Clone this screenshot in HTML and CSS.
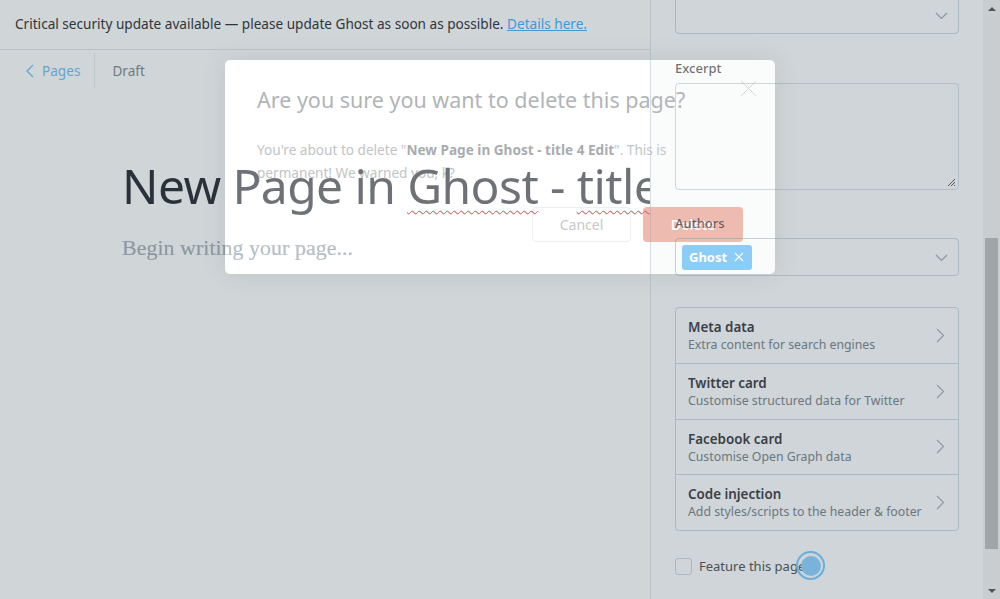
FILE: index.html
```html
<!DOCTYPE html>
<html lang="en">
<head>
<meta charset="utf-8">
<title>Ghost – Delete page</title>
<link rel="stylesheet" href="styles.css">
</head>
<body>
<div class="app">
  <main class="editor">
    <div class="banner">Critical security update available — please update Ghost as soon as possible.&nbsp;<a href="#">Details here.</a></div>
    <nav class="crumbs">
      <a class="back" href="#">
        <svg class="back-icon" width="8" height="14" viewBox="0 0 8 14"><path d="M7 1 1 7l6 6" fill="none" stroke="currentColor" stroke-width="1.2"/></svg>
        Pages
      </a>
      <span class="draft">Draft</span>
    </nav>
    <div class="editor-body">
      <h1 class="title">New Page in <span class="typo">Ghost</span> - <span class="typo">title</span> 4 Edit</h1>
      <p class="placeholder">Begin writing your page...</p>
    </div>
  </main>

  <aside class="settings">
    <div class="settings-inner">
      <div class="select select-top">
        <svg class="chev-down" width="13" height="8" viewBox="0 0 13 8"><path d="M1 1l5.5 5.5L12 1" fill="none" stroke="currentColor" stroke-width="1.2"/></svg>
      </div>

      <div class="field">
        <label class="label">Excerpt</label>
        <div class="textarea">
          <svg class="grip" width="9" height="9" viewBox="0 0 9 9"><path d="M1 8 8 1M4 8 8 4M7 8 8 7" stroke="#555" stroke-width="1"/></svg>
        </div>
      </div>

      <div class="field field-authors">
        <label class="label">Authors</label>
        <div class="select select-authors">
          <span class="chip">Ghost
            <svg width="10" height="10" viewBox="0 0 10 10"><path d="M1 1l8 8M9 1 1 9" stroke="#fff" stroke-width="1.1"/></svg>
          </span>
          <svg class="chev-down" width="13" height="8" viewBox="0 0 13 8"><path d="M1 1l5.5 5.5L12 1" fill="none" stroke="currentColor" stroke-width="1.2"/></svg>
        </div>
      </div>

      <ul class="menu">
        <li class="menu-item">
          <div><div class="menu-title">Meta data</div><div class="menu-sub">Extra content for search engines</div></div>
          <svg class="chev-right" width="9" height="15" viewBox="0 0 9 15"><path d="M1 1l6.5 6.5L1 14" fill="none" stroke="currentColor" stroke-width="1.1"/></svg>
        </li>
        <li class="menu-item">
          <div><div class="menu-title">Twitter card</div><div class="menu-sub">Customise structured data for Twitter</div></div>
          <svg class="chev-right" width="9" height="15" viewBox="0 0 9 15"><path d="M1 1l6.5 6.5L1 14" fill="none" stroke="currentColor" stroke-width="1.1"/></svg>
        </li>
        <li class="menu-item">
          <div><div class="menu-title">Facebook card</div><div class="menu-sub">Customise Open Graph data</div></div>
          <svg class="chev-right" width="9" height="15" viewBox="0 0 9 15"><path d="M1 1l6.5 6.5L1 14" fill="none" stroke="currentColor" stroke-width="1.1"/></svg>
        </li>
        <li class="menu-item">
          <div><div class="menu-title">Code injection</div><div class="menu-sub">Add styles/scripts to the header &amp; footer</div></div>
          <svg class="chev-right" width="9" height="15" viewBox="0 0 9 15"><path d="M1 1l6.5 6.5L1 14" fill="none" stroke="currentColor" stroke-width="1.1"/></svg>
        </li>
      </ul>

      <label class="feature"><span class="checkbox"></span>Feature this page</label>
    </div>

    <div class="scrollbar">
      <div class="sb-btn"><span class="tri-up"></span></div>
      <div class="sb-track"><div class="sb-thumb"></div></div>
      <div class="sb-btn"><span class="tri-down"></span></div>
    </div>
  </aside>
</div>

<div class="modal">
  <svg class="modal-close" width="17" height="17" viewBox="0 0 17 17"><path d="M1 1l15 15M16 1 1 16" stroke="currentColor" stroke-width="1"/></svg>
  <h2 class="modal-title">Are you sure you want to delete this page?</h2>
  <p class="modal-text">You're about to delete "<strong>New Page in Ghost - title 4 Edit</strong>". This is permanent! We warned you, k?</p>
  <div class="modal-actions">
    <button class="btn btn-cancel">Cancel</button>
    <button class="btn btn-delete">Delete</button>
  </div>
</div>

<div class="click-ring"><span class="click-dot"></span></div>
</body>
</html>
```

FILE: styles.css
```css
* { box-sizing: border-box; }

html, body {
  margin: 0;
  height: 599px;
  overflow: hidden;
}

body {
  position: relative;
  background: #d0d5d8;
  font-family: "Noto Sans", "Open Sans", sans-serif;
  color: #2e353b;
}

.app {
  position: relative;
  z-index: 2;
  display: grid;
  grid-template-columns: 650px 1fr;
  height: 599px;
}

/* ---------- editor column ---------- */
.editor {
  overflow: hidden;
  min-width: 0;
}

.banner {
  height: 50px;
  border-bottom: 1px solid #b9c1c6;
  display: flex;
  align-items: center;
  padding: 0 15px 2px;
  font-size: 13.6px;
  color: #2e353b;
  white-space: nowrap;
}
.banner a {
  color: #3d9ad8;
  text-decoration: underline;
}

.crumbs {
  display: flex;
  align-items: center;
  height: 35px;
  margin-top: 3px;
  padding-left: 26px;
  font-size: 13.6px;
}
.back {
  display: flex;
  align-items: center;
  gap: 8px;
  height: 35px;
  padding-right: 14px;
  border-right: 1px solid #bcc6cb;
  color: #67a3cf;
  text-decoration: none;
}
.draft {
  padding-left: 17px;
  color: #6f7a80;
}

.editor-body {
  padding: 68px 0 0 122px;
}
.title {
  margin: 0;
  font-size: 48px;
  line-height: 60px;
  font-weight: 400;
  white-space: nowrap;
  letter-spacing: -0.6px;
  background: linear-gradient(90deg, #29323a 103px, #6e7277 103px);
  -webkit-background-clip: text;
  background-clip: text;
  color: transparent;
}
.typo {
  text-decoration: underline wavy #f27a7a;
  text-decoration-thickness: 1px;
  text-underline-offset: 6px;
  text-decoration-skip-ink: none;
}
.placeholder {
  margin: 18px 0 0;
  font-family: "Liberation Serif", "DejaVu Serif", serif;
  font-size: 22px;
  line-height: 28px;
  white-space: nowrap;
  background: linear-gradient(90deg, #8b98a2 103px, #b7c1c8 103px);
  -webkit-background-clip: text;
  background-clip: text;
  color: transparent;
  -webkit-text-stroke: 0.2px rgba(139, 152, 162, 0.6);
}

/* ---------- settings sidebar ---------- */
.settings {
  display: flex;
  border-left: 1px solid rgba(140, 165, 180, 0.35);
  background: rgba(205, 212, 216, 0.1);
  min-width: 0;
}
.settings-inner {
  flex: 1;
  padding: 0 24px 0 24px;
}

.select {
  position: relative;
  height: 38px;
  border: 1px solid rgba(120, 150, 168, 0.42);
  border-radius: 4px;
  display: flex;
  align-items: center;
  padding: 0 6px;
}
.select-top {
  margin-top: -4px;
}
.chev-down {
  position: absolute;
  right: 10px;
  top: 50%;
  margin-top: -3px;
  color: #8a979f;
}

.field {
  margin-top: 24px;
}
.field-authors {
  margin-top: 23px;
}
.label {
  display: block;
  height: 20px;
  line-height: 20px;
  margin-bottom: 5px;
  font-size: 13px;
  font-weight: 500;
  color: rgba(35, 40, 45, 0.66);
}
.textarea {
  position: relative;
  height: 107px;
  border: 1px solid rgba(120, 150, 168, 0.35);
  border-radius: 4px;
}
.grip {
  position: absolute;
  right: 2px;
  bottom: 2px;
}

.chip {
  display: inline-flex;
  align-items: center;
  gap: 7px;
  height: 25px;
  padding: 0 8px 0 7px;
  background: #8bcdf6;
  border-radius: 3px;
  color: #fff;
  font-size: 13px;
  font-weight: 700;
}

.menu {
  list-style: none;
  margin: 31px 0 0;
  padding: 0;
  border: 1px solid rgba(120, 150, 168, 0.42);
  border-radius: 4px;
}
.menu-item {
  display: flex;
  align-items: center;
  justify-content: space-between;
  height: 56px;
  padding: 1px 13px 0 12px;
  border-top: 1px solid rgba(120, 150, 168, 0.42);
}
.menu-item:first-child {
  border-top: 0;
  height: 55px;
}
.menu-item:nth-child(3) {
  height: 55px;
}
.menu-title {
  font-size: 13.4px;
  font-weight: 600;
  line-height: 18px;
  color: #3a4046;
}
.menu-sub {
  font-size: 12.3px;
  line-height: 18px;
  color: #6a777e;
}
.chev-right {
  color: #8c979e;
  margin-top: -2px;
}

.feature {
  display: flex;
  align-items: center;
  gap: 7px;
  margin-top: 26px;
  font-size: 13px;
  color: #4a5055;
}
.checkbox {
  width: 17px;
  height: 17px;
  border: 1px solid rgba(120, 150, 168, 0.45);
  border-radius: 3px;
}

/* fake scrollbar */
.scrollbar {
  width: 17px;
  display: flex;
  flex-direction: column;
  background: #c9cdd0;
}
.sb-btn {
  height: 17px;
  display: flex;
  align-items: center;
  justify-content: center;
}
.tri-up {
  border-left: 4px solid transparent;
  border-right: 4px solid transparent;
  border-bottom: 4px solid #505457;
}
.tri-down {
  border-left: 4px solid transparent;
  border-right: 4px solid transparent;
  border-top: 4px solid #505457;
}
.sb-track {
  flex: 1;
  padding: 221px 2px 0;
}
.sb-thumb {
  height: 311px;
  background: #a0a5a8;
}

/* ---------- modal ---------- */
.modal {
  position: absolute;
  z-index: 1;
  left: 225px;
  top: 60px;
  width: 550px;
  height: 214px;
  padding: 25px 32px 0;
  background: #fff;
  border-radius: 5px;
  box-shadow: 0 0 24px rgba(60, 70, 80, 0.12);
}
.modal-close {
  position: absolute;
  top: 20px;
  right: 18px;
  color: #d4d8db;
}
.modal-title {
  margin: 0;
  font-size: 21.5px;
  line-height: 30px;
  font-weight: 400;
  color: #b1b4b7;
  white-space: nowrap;
}
.modal-text {
  margin: 23px 0 0;
  font-size: 13.6px;
  line-height: 23px;
  color: #c1c4c6;
}
.modal-text strong {
  color: #a9acaf;
}
.modal-actions {
  display: flex;
  justify-content: flex-end;
  gap: 12px;
  margin-top: 23px;
}
.btn {
  width: 99px;
  height: 35px;
  border-radius: 4px;
  font-family: inherit;
  font-size: 14px;
}
.btn-cancel {
  background: #fff;
  border: 1px solid #eceef0;
  color: #c5c8cb;
}
.btn-delete {
  width: 100px;
  background: #f2b8ac;
  border: 0;
  color: #fff;
  font-weight: 600;
}

/* click indicator */
.click-ring {
  position: absolute;
  z-index: 3;
  left: 796px;
  top: 551px;
  width: 29px;
  height: 29px;
  border: 2px solid #69aedc;
  border-radius: 50%;
  display: flex;
  align-items: center;
  justify-content: center;
}
.click-dot {
  width: 20px;
  height: 20px;
  border-radius: 50%;
  background: #79b3d9;
}
```
